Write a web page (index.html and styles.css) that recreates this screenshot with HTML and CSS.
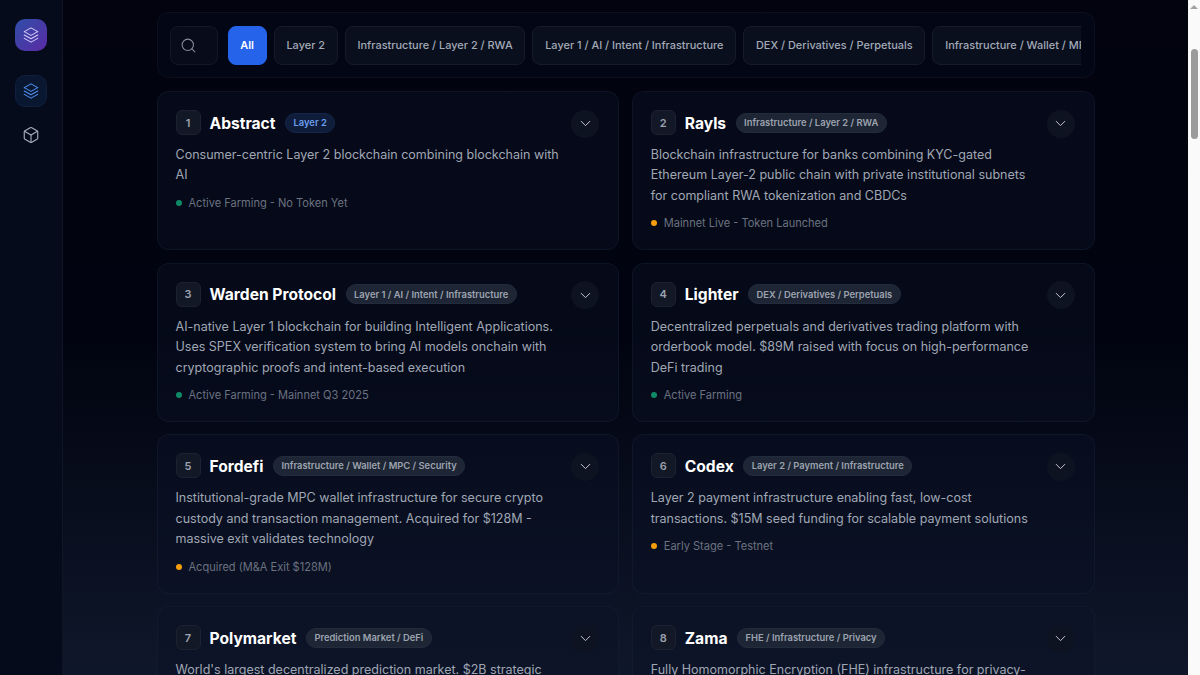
FILE: index.html
```html
<!DOCTYPE html>
<html lang="en">
<head>
  <meta charset="UTF-8"/>
  <meta name="viewport" content="width=device-width, initial-scale=1.0"/>
  <title>Airdrop Projects</title>
  <link rel="stylesheet" href="styles.css">
</head>
<body>
  <svg class="sprite" width="0" height="0">
    <symbol id="layers" viewBox="0 0 24 24">
      <path d="M12 2.500 3 7.500l9 5 9-5-9-5Z"/>
      <path d="m3 12 9 5 9-5"/>
      <path d="m3 16.500 9 5 9-5"/>
    </symbol>
    <symbol id="chevron" viewBox="0 0 24 24">
      <path d="m6 9 6 6 6-6"/>
    </symbol>
  </svg>

  <div class="app">
    <aside class="sidebar">
      <div class="logo"><svg class="icon"><use href="#layers"/></svg></div>
      <a class="nav-item active"><svg class="icon"><use href="#layers"/></svg></a>
      <a class="nav-item">
        <svg class="icon" viewBox="0 0 24 24">
          <path d="M21 16V8a2 2 0 0 0-1-1.730l-7-4a2 2 0 0 0-2 0l-7 4A2 2 0 0 0 3 8v8a2 2 0 0 0 1 1.730l7 4a2 2 0 0 0 2 0l7-4A2 2 0 0 0 21 16Z"/>
          <path d="M3.300 7 12 12l8.700-5"/>
          <path d="M12 22V12"/>
        </svg>
      </a>
    </aside>

    <main class="main">
      <div class="content">
        <div class="filters">
          <div class="search">
            <svg class="icon" viewBox="0 0 24 24"><circle cx="11" cy="11" r="8"/><path d="m21 21-4.300-4.300"/></svg>
          </div>
          <div class="chips">
            <button class="chip selected">All</button>
            <button class="chip">Layer 2</button>
            <button class="chip">Infrastructure / Layer 2 / RWA</button>
            <button class="chip">Layer 1 / AI / Intent / Infrastructure</button>
            <button class="chip">DEX / Derivatives / Perpetuals</button>
            <button class="chip">Infrastructure / Wallet / MPC / Security</button>
          </div>
        </div>

        <div class="grid">
          <article class="card">
            <div class="card-head">
              <span class="num">1</span>
              <h2>Abstract</h2>
              <span class="tag blue">Layer 2</span>
              <button class="toggle"><svg class="icon"><use href="#chevron"/></svg></button>
            </div>
            <p class="desc">Consumer-centric Layer 2 blockchain combining blockchain with AI</p>
            <div class="status"><i class="dot green"></i>Active Farming - No Token Yet</div>
          </article>

          <article class="card">
            <div class="card-head">
              <span class="num">2</span>
              <h2>Rayls</h2>
              <span class="tag">Infrastructure / Layer 2 / RWA</span>
              <button class="toggle"><svg class="icon"><use href="#chevron"/></svg></button>
            </div>
            <p class="desc">Blockchain infrastructure for banks combining KYC-gated Ethereum Layer-2 public chain with private institutional subnets for compliant RWA tokenization and CBDCs</p>
            <div class="status"><i class="dot amber"></i>Mainnet Live - Token Launched</div>
          </article>

          <article class="card">
            <div class="card-head">
              <span class="num">3</span>
              <h2>Warden Protocol</h2>
              <span class="tag">Layer 1 / AI / Intent / Infrastructure</span>
              <button class="toggle"><svg class="icon"><use href="#chevron"/></svg></button>
            </div>
            <p class="desc">AI-native Layer 1 blockchain for building Intelligent Applications. Uses SPEX verification system to bring AI models onchain with cryptographic proofs and intent-based execution</p>
            <div class="status"><i class="dot green"></i>Active Farming - Mainnet Q3 2025</div>
          </article>

          <article class="card">
            <div class="card-head">
              <span class="num">4</span>
              <h2>Lighter</h2>
              <span class="tag">DEX / Derivatives / Perpetuals</span>
              <button class="toggle"><svg class="icon"><use href="#chevron"/></svg></button>
            </div>
            <p class="desc">Decentralized perpetuals and derivatives trading platform with orderbook model. $89M raised with focus on high-performance DeFi trading</p>
            <div class="status"><i class="dot green"></i>Active Farming</div>
          </article>

          <article class="card">
            <div class="card-head">
              <span class="num">5</span>
              <h2>Fordefi</h2>
              <span class="tag">Infrastructure / Wallet / MPC / Security</span>
              <button class="toggle"><svg class="icon"><use href="#chevron"/></svg></button>
            </div>
            <p class="desc">Institutional-grade MPC wallet infrastructure for secure crypto custody and transaction management. Acquired for $128M - massive exit validates technology</p>
            <div class="status"><i class="dot amber"></i>Acquired (M&amp;A Exit $128M)</div>
          </article>

          <article class="card">
            <div class="card-head">
              <span class="num">6</span>
              <h2>Codex</h2>
              <span class="tag">Layer 2 / Payment / Infrastructure</span>
              <button class="toggle"><svg class="icon"><use href="#chevron"/></svg></button>
            </div>
            <p class="desc">Layer 2 payment infrastructure enabling fast, low-cost transactions. $15M seed funding for scalable payment solutions</p>
            <div class="status"><i class="dot amber"></i>Early Stage - Testnet</div>
          </article>

          <article class="card">
            <div class="card-head">
              <span class="num">7</span>
              <h2>Polymarket</h2>
              <span class="tag">Prediction Market / DeFi</span>
              <button class="toggle"><svg class="icon"><use href="#chevron"/></svg></button>
            </div>
            <p class="desc">World's largest decentralized prediction market. $2B strategic investment from major institutions</p>
          </article>

          <article class="card">
            <div class="card-head">
              <span class="num">8</span>
              <h2>Zama</h2>
              <span class="tag">FHE / Infrastructure / Privacy</span>
              <button class="toggle"><svg class="icon"><use href="#chevron"/></svg></button>
            </div>
            <p class="desc">Fully Homomorphic Encryption (FHE) infrastructure for privacy-preserving smart contracts</p>
          </article>
        </div>
      </div>
    </main>

    <div class="scrollbar">
      <span class="arrow"></span>
      <span class="thumb"></span>
    </div>
  </div>
</body>
</html>
```
FILE: styles.css
```css
* { box-sizing: border-box; margin: 0; padding: 0; }
html, body { height: 100%; overflow: hidden; }
body {
  font-family: 'Inter', 'Liberation Sans', sans-serif;
  background: linear-gradient(180deg, #02030f 0%, #010410 50%, #0f172a 100%);
  color: #9ca3af;
}

.sprite { position: absolute; }

.icon {
  width: 18px;
  height: 18px;
  fill: none;
  stroke: currentColor;
  stroke-width: 1.5;
  stroke-linecap: round;
  stroke-linejoin: round;
}

.app {
  display: flex;
  height: 675px;
  overflow: hidden;
}

/* left rail */
.sidebar {
  width: 63px;
  flex-shrink: 0;
  display: flex;
  flex-direction: column;
  align-items: center;
  padding-top: 19px;
  background: #060b1c;
  border-right: 1px solid #0f1524;
}

.logo {
  width: 32px;
  height: 32px;
  border-radius: 10px;
  display: flex;
  align-items: center;
  justify-content: center;
  color: #cfc9f4;
  background: linear-gradient(135deg, #2f4ea8 0%, #5b2aa5 100%);
  margin-bottom: 24px;
}

.nav-item {
  width: 32px;
  height: 32px;
  border-radius: 10px;
  display: flex;
  align-items: center;
  justify-content: center;
  color: #a7adba;
  margin-bottom: 12px;
}

.nav-item.active {
  color: #4f8ff0;
  background: #0a1730;
  border: 1px solid #101f3d;
}

/* page */
.main {
  flex: 1;
  min-width: 0;
  display: flex;
  justify-content: center;
  padding-top: 12px;
}

.content {
  width: 938px;
}

.filters {
  display: flex;
  align-items: center;
  gap: 10px;
  height: 66px;
  padding: 0 13px 0 12px;
  margin-bottom: 13px;
  border: 1px solid rgba(30, 41, 59, 0.3);
  border-radius: 12px;
  background: rgba(12, 18, 38, 0.2);
}

.search {
  width: 48px;
  height: 39px;
  flex-shrink: 0;
  display: flex;
  align-items: center;
  padding-left: 9px;
  border: 1px solid #131826;
  border-radius: 8px;
  background: #080c1a;
  color: #868c99;
}
.search .icon { width: 17px; height: 17px; }

.chips {
  display: flex;
  gap: 7px;
  flex: 1;
  min-width: 0;
  overflow: hidden;
}

.chip {
  flex-shrink: 0;
  height: 39px;
  padding: 0 11.750px;
  border: 1px solid #151b2a;
  border-radius: 8px;
  background: #0a0f1e;
  color: #a3aab7;
  font: 500 10.940px 'Inter', sans-serif;
}

.chip.selected {
  background: #2563eb;
  border-color: #2563eb;
  color: #fff;
  font-weight: 600;
}

.grid {
  display: grid;
  grid-template-columns: 1fr 1fr;
  gap: 12.500px;
}

.card {
  padding: 18px;
  border: 1px solid rgba(30, 41, 59, 0.35);
  border-radius: 12px;
  background: rgba(12, 18, 38, 0.45);
}

.card-head {
  display: flex;
  align-items: center;
  height: 25px;
  margin-bottom: 10px;
}

.num {
  width: 25px;
  height: 25px;
  flex-shrink: 0;
  display: flex;
  align-items: center;
  justify-content: center;
  border: 1px solid #1c2231;
  border-radius: 6px;
  background: #121826;
  font-size: 11px;
  font-weight: 600;
  color: #9ca3af;
}

.card-head h2 {
  margin-left: 9px;
  padding-top: 1px;
  font-size: 15.600px;
  font-weight: 700;
  color: #fff;
}

.tag {
  margin-left: 9.500px;
  padding: 2.500px 7.500px;
  border: 1px solid #232c3d;
  border-radius: 999px;
  background: #1e2635;
  font-size: 9.380px;
  font-weight: 600;
  line-height: 13px;
  color: #9ca3af;
}

.tag.blue {
  background: #0f1d3a;
  border-color: #14264a;
  color: #6b9eee;
}

.toggle {
  margin: 2px 1px 0 auto;
  width: 28px;
  height: 28px;
  flex-shrink: 0;
  display: flex;
  align-items: center;
  justify-content: center;
  border: none;
  border-radius: 50%;
  background: #0e1322;
  color: #c2c7d0;
}
.toggle .icon { width: 17px; height: 17px; stroke-width: 1.4; }

.desc {
  max-width: 385px;
  font-size: 12.530px;
  line-height: 20.400px;
  color: #a0a7b4;
}

.status {
  display: flex;
  align-items: center;
  gap: 7px;
  margin-top: 9px;
  font-size: 11.060px;
  line-height: 16px;
  color: #6b7280;
}

.dot {
  width: 6px;
  height: 6px;
  border-radius: 50%;
}
.dot.green { background: #108a66; }
.dot.amber { background: #f59e0b; }

/* page scrollbar from the screenshot */
.scrollbar {
  width: 12px;
  flex-shrink: 0;
  display: flex;
  flex-direction: column;
  align-items: center;
  background: #fafafa;
}

.arrow {
  width: 0;
  height: 0;
  margin-top: 5px;
  border: 4px solid transparent;
  border-top: 0;
  border-bottom: 4px solid #a3a3a3;
}

.thumb {
  width: 7px;
  height: 90px;
  margin-top: 40px;
  border-radius: 4px;
  background: #9b9b9b;
}
```
